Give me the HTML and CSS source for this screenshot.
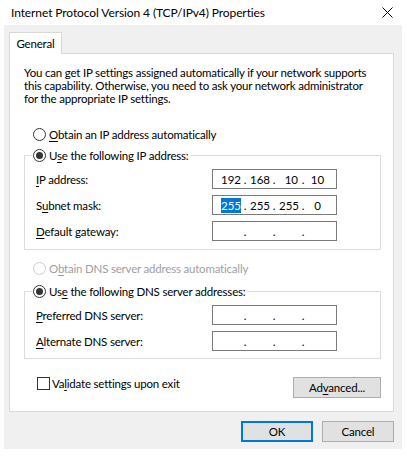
FILE: index.html
```html
<!DOCTYPE html>
<html>
<head>
<meta charset="utf-8">
<link rel="stylesheet" href="styles.css">
</head>
<body>
<div class="window">
  <div class="titlebar">
    <span class="title">Internet Protocol Version 4 (TCP/IPv4) Properties</span>
    <svg class="close" width="11" height="11" viewBox="0 0 11 11"><path d="M0.5 0.5L10.5 10.5M10.5 0.5L0.5 10.5" stroke="#000" stroke-width="1" fill="none"/></svg>
  </div>
  <div class="body">
    <div class="tabs"><div class="tab">General</div></div>
    <div class="panel">
      <p class="intro"><span class="line">You can get IP settings assigned automatically if your network supports</span><span class="line">this capability. Otherwise, you need to ask your network administrator</span><span class="line">for the appropriate IP settings.</span></p>
      <label class="radio r-auto"><span class="rb"></span><span><u>O</u>btain an IP address automatically</span></label>
      <fieldset class="group g-ip">
        <legend><label class="radio"><span class="rb on"></span><span>U<u>s</u>e the following IP address:</span></label></legend>
        <div class="rows">
          <div class="row"><span class="lbl"><u>I</u>P address:</span><div class="ip"><span class="f">192</span><span class="d">.</span><span class="f">168</span><span class="d">.</span><span class="f">10</span><span class="d">.</span><span class="f last">10</span></div></div>
          <div class="row"><span class="lbl">S<u>u</u>bnet mask:</span><div class="ip"><span class="f"><span class="sel">255</span></span><span class="d">.</span><span class="f">255</span><span class="d">.</span><span class="f">255</span><span class="d">.</span><span class="f last">0</span></div></div>
          <div class="row"><span class="lbl"><u>D</u>efault gateway:</span><div class="ip"><span class="f"></span><span class="d">.</span><span class="f"></span><span class="d">.</span><span class="f"></span><span class="d">.</span><span class="f last"></span></div></div>
        </div>
      </fieldset>
      <label class="radio r-dns disabled"><span class="rb"></span><span>O<u>b</u>tain DNS server address automatically</span></label>
      <fieldset class="group g-dns">
        <legend><label class="radio"><span class="rb on"></span><span>Us<u>e</u> the following DNS server addresses:</span></label></legend>
        <div class="rows">
          <div class="row"><span class="lbl"><u>P</u>referred DNS server:</span><div class="ip"><span class="f"></span><span class="d">.</span><span class="f"></span><span class="d">.</span><span class="f"></span><span class="d">.</span><span class="f last"></span></div></div>
          <div class="row"><span class="lbl"><u>A</u>lternate DNS server:</span><div class="ip"><span class="f"></span><span class="d">.</span><span class="f"></span><span class="d">.</span><span class="f"></span><span class="d">.</span><span class="f last"></span></div></div>
        </div>
      </fieldset>
      <div class="footer">
        <label class="check"><span class="cb"></span><span>Va<u>l</u>idate settings upon exit</span></label>
        <button class="btn adv">Ad<u>v</u>anced...</button>
      </div>
    </div>
    <div class="actions">
      <button class="btn act default">OK</button>
      <button class="btn act">Cancel</button>
    </div>
  </div>
</div>
</body>
</html>
```

FILE: styles.css
```css
* { box-sizing: border-box; }
html, body { margin: 0; padding: 0; }
body {
  background: #fff;
  width: 407px;
  height: 456px;
  overflow: hidden;
  font-family: Lato, "Open Sans", sans-serif;
  font-size: 11.5px;
  letter-spacing: -0.2px;
  color: #000;
}
u { text-decoration: underline; text-underline-offset: 2px; }
.window { width: 407px; }
.titlebar {
  height: 25px;
  display: flex;
  align-items: center;
  justify-content: space-between;
  padding: 0 14px 0 11px;
}
.title { line-height: 16px; font-size: 12px; letter-spacing: -0.1px; }
.close { display: block; }
.body {
  margin: 0 5px 0 4px;
  height: 424px;
  background: #f0f0f0;
  padding: 7px 8px 0 5px;
}
.tabs { display: flex; height: 21px; }
.tab {
  position: relative;
  z-index: 1;
  width: 53px;
  height: 22px;
  background: #fff;
  border: 1px solid #d9d9d9;
  border-bottom: none;
  display: flex;
  align-items: center;
  justify-content: center;
}
.panel {
  height: 359px;
  background: #fff;
  border: 1px solid #d9d9d9;
  padding: 12px 12px 0 14px;
  display: flex;
  flex-direction: column;
}
.intro { margin: 0; white-space: nowrap; }
.line { display: block; height: 13px; line-height: 13px; }
.radio {
  display: flex;
  align-items: center;
  height: 15px;
  gap: 3px;
  white-space: nowrap;
}
.rb {
  flex: none;
  width: 13px;
  height: 13px;
  border: 1px solid #333;
  border-radius: 50%;
  background: #fff;
  display: flex;
  align-items: center;
  justify-content: center;
}
.rb.on::after {
  content: "";
  width: 7px;
  height: 7px;
  border-radius: 50%;
  background: #333;
}
.r-auto { margin: 22px 0 0 9px; }
.r-dns { margin: 11px 0 0 9px; }
.disabled { color: #a0a0a0; }
.disabled .rb { border-color: #cccccc; }
.group {
  margin: 6px 0 0;
  padding: 0 0 8px 7px;
  border: 1px solid #dcdcdc;
  min-width: 0;
}
.g-dns { margin-top: 8px; padding-bottom: 7px; }
.group legend { padding: 0 2px 0 1px; }
.rows { display: flex; flex-direction: column; gap: 6px; margin-top: 6px; }
.row { display: flex; align-items: center; height: 20px; }
.lbl { width: 176px; margin-left: 4px; white-space: nowrap; }
.ip {
  width: 125px;
  height: 20px;
  border: 1px solid #7a7a7a;
  background: #fff;
  display: flex;
  align-items: center;
  padding-left: 8px;
  font-size: 11.5px;
  letter-spacing: 0;
}
.f { width: 19px; text-align: right; }
.f.last { text-align: center; }
.d { width: 10px; text-align: center; }
.sel { background: #0078d7; color: #fff; padding: 1px 0; }
.footer {
  display: flex;
  justify-content: space-between;
  align-items: flex-start;
  margin-top: 18px;
}
.check {
  display: flex;
  align-items: center;
  gap: 2px;
  margin-left: 13px;
  height: 13px;
  white-space: nowrap;
}
.cb {
  flex: none;
  width: 13px;
  height: 13px;
  border: 1px solid #333;
  background: #fff;
}
.btn {
  height: 21px;
  background: #e1e1e1;
  border: 1px solid #adadad;
  font: inherit;
  letter-spacing: inherit;
  color: #000;
  padding: 0;
}
.adv { width: 88px; }
.actions {
  display: flex;
  justify-content: flex-end;
  gap: 9px;
  margin-top: 9px;
}
.act { width: 72px; }
.default { border-color: #0078d7; box-shadow: inset 0 0 0 1px #0078d7; }
```
